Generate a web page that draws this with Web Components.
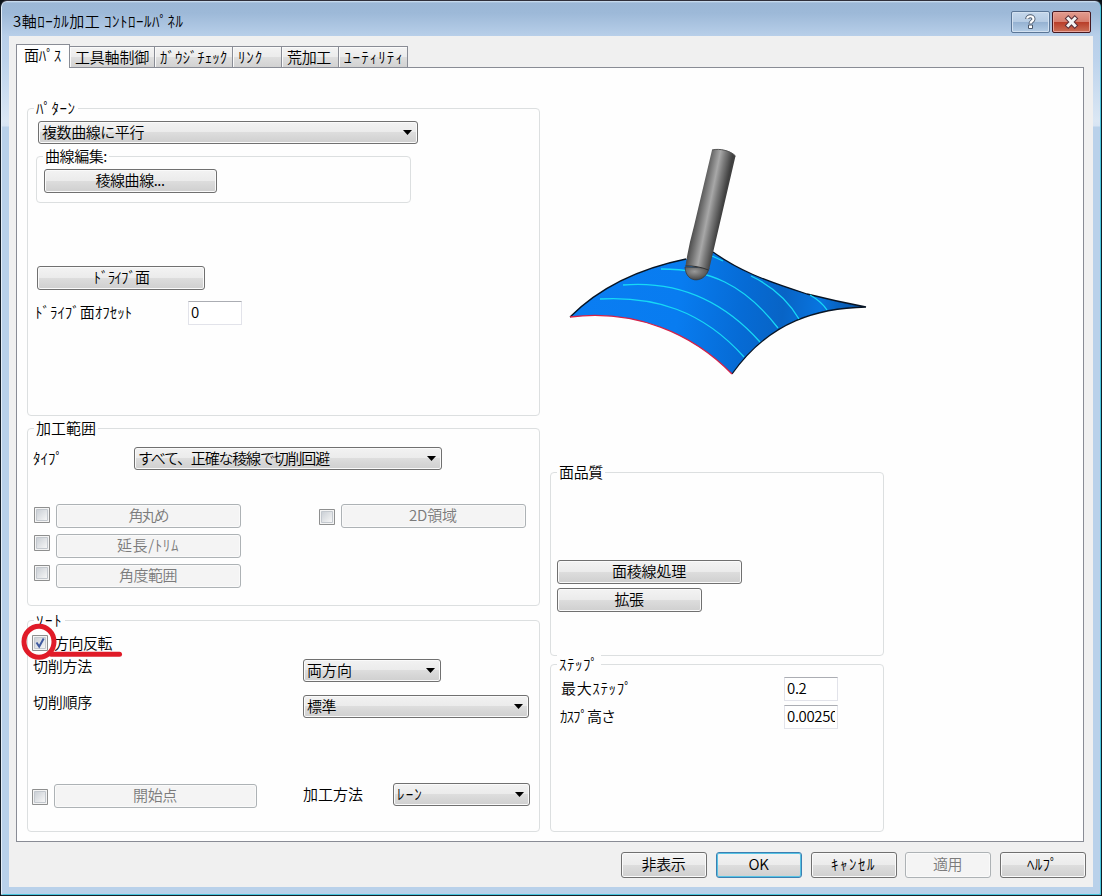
<!DOCTYPE html>
<html lang="ja">
<head>
<meta charset="utf-8">
<title>3軸ﾛｰｶﾙ加工 ｺﾝﾄﾛｰﾙﾊﾟﾈﾙ</title>
<style>
html,body{margin:0;padding:0;width:1102px;height:896px;overflow:hidden;background:#0b1218}
body{font:350 15px/20px "Noto Sans CJK JP","Liberation Sans",sans-serif;color:#000}
</style>
</head>
<body>
<panel-app></panel-app>
<script>
const define = (name, html, setup) => {
  const t = document.createElement('template');
  t.innerHTML = html;
  customElements.define(name, class extends HTMLElement {
    connectedCallback() {
      if (this.shadowRoot) return;
      this.attachShadow({mode: 'open'}).append(t.content.cloneNode(true));
      if (this.hasAttribute('w')) this.style.width = this.getAttribute('w') + 'px';
      if (this.hasAttribute('h')) this.style.height = this.getAttribute('h') + 'px';
      if (setup) setup(this, this.shadowRoot);
    }
  });
};

/* Whole dialog */
define('panel-app', `
<style>
:host{display:block;width:1102px;height:896px}
.row{display:flex;align-items:flex-start}
.page{display:flex;align-items:flex-start;padding:0 0 0 10px;height:100%;box-sizing:border-box}
.left{width:513px;padding-top:40px}
.right{margin-left:10px;width:334px;padding-top:72px}
</style>
<ui-window>
  <ui-text slot="title" w="171">3軸ﾛｰｶﾙ加工 ｺﾝﾄﾛｰﾙﾊﾟﾈﾙ</ui-text>
  <ui-tabs>
    <ui-tab slot="tab" w="54" active><ui-text w="37">面ﾊﾟｽ</ui-text></ui-tab>
    <ui-tab slot="tab" w="85"><ui-text w="74">工具軸制御</ui-text></ui-tab>
    <ui-tab slot="tab" w="78"><ui-text w="67">ｶﾞｳｼﾞﾁｪｯｸ</ui-text></ui-tab>
    <ui-tab slot="tab" w="49"><ui-text w="25">ﾘﾝｸ</ui-text></ui-tab>
    <ui-tab slot="tab" w="57"><ui-text w="44">荒加工</ui-text></ui-tab>
    <ui-tab slot="tab" w="69"><ui-text w="60">ﾕｰﾃｨﾘﾃｨ</ui-text></ui-tab>
    <div class="page">
      <div class="left">
        <ui-group h="308">
          <ui-text slot="title" w="40">ﾊﾟﾀｰﾝ</ui-text>
          <ui-combo w="380" style="margin:3px 0 0 10px"><ui-text w="102">複数曲線に平行</ui-text></ui-combo>
          <ui-group w="375" h="47" style="margin:12px 0 0 8px">
            <ui-text slot="title" w="62">曲線編集:</ui-text>
            <ui-button w="173" style="margin:3px 0 0 7px"><ui-text w="69">稜線曲線...</ui-text></ui-button>
          </ui-group>
          <ui-button w="168" style="margin:63px 0 0 9px"><ui-text w="54">ﾄﾞﾗｲﾌﾞ面</ui-text></ui-button>
          <div class="row" style="margin:11px 0 0 7px">
            <ui-text w="97" style="margin:1px 56px 0 0">ﾄﾞﾗｲﾌﾞ面ｵﾌｾｯﾄ</ui-text><ui-input>0</ui-input>
          </div>
        </ui-group>
        <ui-group h="178" style="margin-top:12px">
          <ui-text slot="title" w="60">加工範囲</ui-text>
          <div class="row" style="margin:9px 0 0 5px">
            <ui-text w="30" style="margin:1px 71px 0 0">ﾀｲﾌﾟ</ui-text>
            <ui-combo w="308"><ui-text w="191">すべて、正確な稜線で切削回避</ui-text></ui-combo>
          </div>
          <div class="row" style="margin:34px 0 0 6px">
            <ui-check style="margin:3px 6px 0 0"></ui-check>
            <ui-button w="185" off><ui-text w="39">角丸め</ui-text></ui-button>
            <ui-check style="margin:5px 6px 0 78px"></ui-check>
            <ui-button w="185" off><ui-text w="48">2D領域</ui-text></ui-button>
          </div>
          <div class="row" style="margin:6px 0 0 6px">
            <ui-check style="margin:1px 6px 0 0"></ui-check>
            <ui-button w="185" off><ui-text w="62">延長/ﾄﾘﾑ</ui-text></ui-button>
          </div>
          <div class="row" style="margin:6px 0 0 6px">
            <ui-check style="margin:1px 6px 0 0"></ui-check>
            <ui-button w="185" off><ui-text w="58">角度範囲</ui-text></ui-button>
          </div>
        </ui-group>
        <ui-group h="212" style="margin-top:14px">
          <ui-text slot="title" w="27">ｿｰﾄ</ui-text>
          <ui-marked style="margin:5px 0 0 4px">
            <ui-check checked></ui-check><ui-text w="58" style="margin:-2px 0 0 6px">方向反転</ui-text>
          </ui-marked>
          <div class="row" style="margin:8px 0 0 5px">
            <ui-text w="59" style="margin:-3px 211px 0 0">切削方法</ui-text>
            <ui-combo w="138"><ui-text w="45">両方向</ui-text></ui-combo>
          </div>
          <div class="row" style="margin:13px 0 0 5px">
            <ui-text w="59" style="margin:-3px 211px 0 0">切削順序</ui-text>
            <ui-combo w="226"><ui-text w="29">標準</ui-text></ui-combo>
          </div>
          <div class="row" style="margin:65px 0 0 4px">
            <ui-check style="margin:6px 6px 0 0"></ui-check>
            <ui-button w="203" off style="margin-top:1px"><ui-text w="44">開始点</ui-text></ui-button>
            <ui-text w="60" style="margin:1px 30px 0 46px">加工方法</ui-text>
            <ui-combo w="137"><ui-text w="26">ﾚｰﾝ</ui-text></ui-combo>
          </div>
        </ui-group>
      </div>
      <div class="right">
        <tool-preview style="margin-left:10px"></tool-preview>
        <ui-group h="184" style="margin-top:82px">
          <ui-text slot="title" w="44">面品質</ui-text>
          <ui-button w="185" style="margin:78px 0 0 6px"><ui-text w="74">面稜線処理</ui-text></ui-button>
          <ui-button w="145" style="margin:4px 0 0 6px"><ui-text w="29">拡張</ui-text></ui-button>
        </ui-group>
        <ui-group h="168" style="margin-top:8px">
          <ui-text slot="title" w="40">ｽﾃｯﾌﾟ</ui-text>
          <div class="row" style="margin:3px 0 0 10px">
            <ui-text w="72" style="margin:1px 151px 0 0">最大ｽﾃｯﾌﾟ</ui-text><ui-input>0.2</ui-input>
          </div>
          <div class="row" style="margin:4px 0 0 9px">
            <ui-text w="54" style="margin:1px 170px 0 0">ｶｽﾌﾟ高さ</ui-text><ui-input>0.00250</ui-input>
          </div>
        </ui-group>
      </div>
    </div>
  </ui-tabs>
  <ui-button slot="actions" w="86" h="26"><ui-text w="44">非表示</ui-text></ui-button>
  <ui-button slot="actions" w="86" h="26" primary><ui-text w="20">OK</ui-text></ui-button>
  <ui-button slot="actions" w="86" h="26"><ui-text w="45">ｷｬﾝｾﾙ</ui-text></ui-button>
  <ui-button slot="actions" w="86" h="26" off style="margin-left:-1px"><ui-text w="29">適用</ui-text></ui-button>
  <ui-button slot="actions" w="86" h="26"><ui-text w="31">ﾍﾙﾌﾟ</ui-text></ui-button>
</ui-window>`);

define('ui-window', `
<style>
:host{display:block;height:896px}
.frame{box-sizing:border-box;width:1102px;height:896px;border:1px solid #17202a;border-top:1px solid #302f3a;border-right-color:#101c24;border-radius:7px 7px 2px 2px;
 padding:0 8px 8px;display:flex;flex-direction:column;
 background:linear-gradient(#d4e4f4 0,#9cb7d6 2px,#9db9d8 12px,#b8cfe9 35px,#bdd3ec 60px,#dbe7f4 120px,#d7e4f3 125px,#b9d1ea 126px,#b9d1ea 100%);
 box-shadow:inset 1px 0 #e4eef8,inset -1px -1px #48c4dc}
.bar{height:35px;display:flex;align-items:flex-start}
.title{margin:10px auto 0 4px}
.caps{display:flex;gap:2px;margin:10px 2px 0 0}
.client{flex:1;background:#f0f0f0;padding:8px 9px 0 7px;display:flex;flex-direction:column}
.actions{display:flex;gap:9px;justify-content:flex-end;margin:10px -2px 0 0}
</style>
<div class="frame">
  <div class="bar"><div class="title"><slot name="title"></slot></div>
    <div class="caps"><cap-button kind="help"></cap-button><cap-button kind="close"></cap-button></div></div>
  <div class="client"><slot></slot><div class="actions"><slot name="actions"></slot></div></div>
</div>`);

define('cap-button', `
<style>
:host{display:block;width:39px;height:22px;box-sizing:border-box;border:1px solid #5b7696;border-radius:2px;box-shadow:inset 0 0 0 1px #d3e1f0;
 background:linear-gradient(#c5d7eb 0,#b5cbe3 48%,#94b1d1 50%,#b4cde6 100%)}
:host([kind=close]){border-color:#451820;box-shadow:inset 0 0 0 1px #e9a59b;background:linear-gradient(#e39c8f 0,#d67f70 48%,#b83c28 50%,#cb7058 100%)}
svg{display:block;width:37px;height:20px}
.x{display:none}
:host([kind=close]) .x{display:inline}
:host([kind=close]) .q{display:none}
</style>
<svg viewBox="0 0 37 20" fill="none">
 <g class="q"><path d="M15.2 7C15.200 3.400 21.500 3.400 21.500 7C21.500 9.300 18.500 9.200 18.500 11.800" stroke="#4b586b" stroke-width="4"/><path d="M16.500 13h4v3.500h-4z" fill="#fff" stroke="#4b586b"/><path d="M15.200 6.800C15.200 3.400 21.500 3.400 21.500 7C21.500 9.300 18.500 9.200 18.500 11.400" stroke="#fff" stroke-width="2.200"/></g>
 <g class="x"><path d="M15.200 6.500l6.600 7M21.800 6.500l-6.600 7" stroke="#5a3039" stroke-width="5" stroke-linecap="square"/><path d="M15.200 6.500l6.600 7M21.800 6.500l-6.600 7" stroke="#f4f4f4" stroke-width="3" stroke-linecap="square"/></g>
</svg>`);

define('ui-tabs', `
<style>
:host{display:block;width:1068px}
.strip{display:flex;align-items:flex-end;height:24px;position:relative;z-index:1;margin-bottom:-1px}
.body{height:775px;box-sizing:border-box;border:1px solid #898c95;background:#fefefe}
</style>
<div class="strip"><slot name="tab"></slot></div><div class="body"><slot></slot></div>`);

define('ui-tab', `
<style>
:host{box-sizing:border-box;display:flex;align-items:center;height:22px;border:1px solid #898c95;border-left-width:0;padding:0 0 1px 5px;
 background:linear-gradient(#f3f3f3 0,#ececec 48%,#dedede 52%,#d2d2d2 100%);box-shadow:inset 1px 1px #fafafa}
:host([active]){height:24px;border-left-width:1px;border-bottom:0;background:#fefefe;padding:0 0 3px 7px;box-shadow:none}
</style><slot></slot>`);

define('ui-group', `
<style>
:host{display:block;box-sizing:border-box;border:1px solid #dcdfe0;border-radius:4px}
.t{height:20px;margin:-11px 0 0 6px}
.t span{display:inline-flex;background:#fefefe;padding:0 2px}
</style>
<div class="t"><span><slot name="title"></slot></span></div><slot></slot>`);

define('ui-button', `
<style>
:host{display:flex;align-items:center;justify-content:center;box-sizing:border-box;height:24px;border:1px solid #707070;border-radius:3px;
 background:linear-gradient(#f3f3f3 0,#ebebeb 49%,#dddddd 50%,#cfcfcf 100%);box-shadow:inset 0 0 0 1px #fafafa;padding:0 1px 2px 0;flex:none}
:host([off]){background:#f4f4f4;border-color:#adb2b5;color:#7b7b7b}
:host([primary]){border-color:#3c7fb1;box-shadow:inset 0 0 0 1px #56c3e4}
</style><slot></slot>`);

define('ui-combo', `
<style>
:host{display:flex;align-items:center;justify-content:space-between;box-sizing:border-box;height:23px;border:1px solid #707070;border-radius:3px;padding:0 5px 0 3px;flex:none;
 background:linear-gradient(#f2f2f2 0,#ebebeb 49%,#dddddd 50%,#cfcfcf 100%);box-shadow:inset 0 0 0 1px #fafafa}
svg{width:9px;height:5px}
::slotted(*){margin-top:-2px}
</style><slot></slot><svg viewBox="0 0 9 5"><path d="M0 0h9L4.5 5z"/></svg>`);

define('ui-input', `
<style>
:host{display:block;box-sizing:border-box;width:54px;height:24px;border:1px solid #e2e3ea;border-top-color:#abadb3;background:#fff;padding:0 2px 0 2px;flex:none}
div{overflow:hidden;white-space:nowrap;line-height:20px;letter-spacing:-.35px}
</style><div><slot></slot></div>`);

define('ui-check', `
<style>
:host{display:block;width:16px;height:16px;flex:none}
svg{display:block}
.m{display:none}
:host([checked]) .m{display:inline}
</style>
<svg width="16" height="16" viewBox="0 0 16 16" fill="none">
<defs><linearGradient id="g" x1="0" y1="0" x2="1" y2="1"><stop stop-color="#c9ced4"/><stop offset="1" stop-color="#f8f8f8"/></linearGradient></defs>
<path d="M.5.5h15v15H.5z" fill="#f4f4f4" stroke="#8e8f8f"/><path d="M2.5 2.5h11v11h-11z" fill="url(#g)" stroke="#c3c8ce"/>
<path class="m" d="M4.500 7.500l2.700 4L11.700 3.600" stroke="#3f5aa0" stroke-width="2"/></svg>`);

/* Check row with a hand-drawn red ring and underline lying over it */
define('ui-marked', `
<style>
:host{display:flex;align-items:flex-start;height:16px;position:relative}
svg{position:absolute;left:-12px;top:-13px;pointer-events:none}
</style>
<slot></slot>
<svg width="105" height="40" viewBox="0 0 105 40" fill="none" stroke="#e01b28" stroke-width="5" stroke-linecap="round"><ellipse cx="19" cy="19.8" rx="15" ry="15.5"/><path d="M31 32.3l68.500 0" /></svg>`);

define('tool-preview', `
<style>:host{display:block;width:320px;height:250px}svg{display:block}</style>
<svg width="320" height="250" viewBox="0 0 320 250" fill="none">
<defs>
<linearGradient id="s" x1="20" y1="160" x2="300" y2="190" gradientUnits="userSpaceOnUse"><stop stop-color="#0a7df2"/><stop offset=".35" stop-color="#087cf0"/><stop offset=".58" stop-color="#066bd5"/><stop offset=".72" stop-color="#0864c6"/><stop offset=".85" stop-color="#0874df"/><stop offset="1" stop-color="#064e9c"/></linearGradient>
<linearGradient id="c" x1="137" y1="64" x2="162" y2="69" gradientUnits="userSpaceOnUse"><stop stop-color="#484848"/><stop offset=".25" stop-color="#777"/><stop offset=".5" stop-color="#a8a8a8"/><stop offset=".7" stop-color="#7c7c7c"/><stop offset="1" stop-color="#404040"/></linearGradient>
<radialGradient id="b" cx=".4" cy=".35" r=".65"><stop stop-color="#999"/><stop offset="1" stop-color="#484848"/></radialGradient>
</defs>
<path d="M10 177C40 147 82 128 126 119L153 112C178 130 203 140 247 154C267 159 285 163 306 167C260 168 210 180 172 234C132 193 75 169 10 177Z" fill="url(#s)"/>
<path d="M10 177C40 147 82 128 126 119M153 112C178 130 203 140 247 154C267 159 285 163 306 167C260 168 210 180 172 234" stroke="#071424" stroke-width="1.300"/>
<path d="M10 177C75 169 132 193 172 234" stroke="#d52148" stroke-width="1.300"/>
<g stroke="#17d9f5" stroke-width="1.300"><path d="M40 159C94 156 142 170 184 217"/><path d="M63 145C112 141 159 156 200 202"/><path d="M101 129C149 129 184 144 218 188"/><path d="M152 116L163 121"/><path d="M191 136C212 146 228 160 239 179"/><path d="M250 155C257 159 263 164 267 170"/></g>
<path d="M125 127C126 145 146 143 149 128Z" fill="url(#b)" stroke="#3b3b3b" stroke-width=".8"/>
<path d="M152 10C160 8 171 11 175.500 16L149 130C141 127 133 126 125.500 126Q128 108 134 86Z" fill="url(#c)"/>
<path d="M152 10C160 8 171 11 175.500 16" stroke="#555"/><path d="M125.500 126C133 125.500 141 127 148.500 130" stroke="#333"/>
</svg>`);

/* Single-line caption whose tracking is adjusted so that it fills its width */
define('ui-text', `
<style>:host{display:block;height:20px;line-height:20px;flex:none;white-space:nowrap}span{display:inline-block}</style><span><slot></slot></span>`,
(el, root) => {
  const s = root.querySelector('span');
  const natural = s.getBoundingClientRect().width;
  const n = [...el.textContent.trim()].length;
  if (natural) s.style.letterSpacing = ((+el.getAttribute('w') - natural) / n).toFixed(3) + 'px';
});
</script>
</body>
</html>
